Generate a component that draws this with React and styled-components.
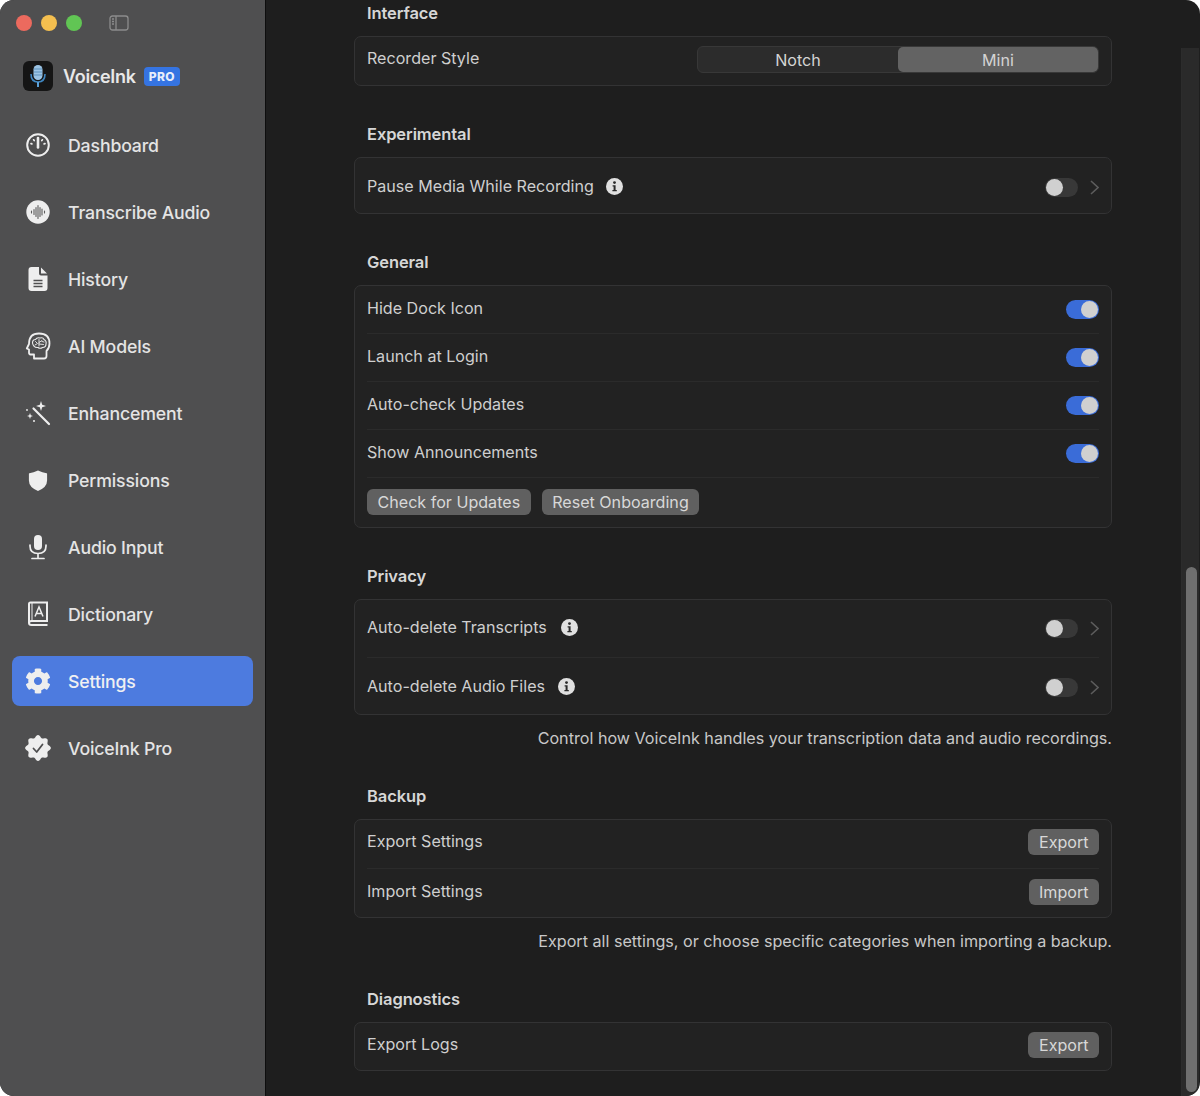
import React from "react";
import styled, { createGlobalStyle } from "styled-components";
import { FaCog } from "react-icons/fa";

const GlobalStyle = createGlobalStyle`
  html, body {
    margin: 0;
    padding: 0;
    background: #ffffff;
  }
  * {
    box-sizing: border-box;
  }
`;

const Window = styled.div`
  display: flex;
  width: 1200px;
  height: 1096px;
  overflow: hidden;
  border-radius: 14px;
  background: #1e1e1e;
  font-family: Inter, "Liberation Sans", sans-serif;
  color: #d8d8d8;
`;

const Sidebar = styled.aside`
  flex: none;
  width: 266px;
  padding: 0 12px;
  background: #4f4f50;
  border-right: 1px solid #0e0e0e;
`;

const TitleBar = styled.div`
  display: flex;
  align-items: center;
  height: 46px;
  padding-left: 4px;
  gap: 9px;
`;

const Light = styled.span`
  width: 16px;
  height: 16px;
  border-radius: 50%;
  background: ${(props) => props.color};
`;

const SidebarToggle = styled.svg`
  width: 20px;
  height: 16px;
  margin-left: 18px;
`;

const Brand = styled.div`
  display: flex;
  align-items: center;
  height: 30px;
  margin-top: 15px;
  margin-bottom: 29px;
  padding-left: 11px;
`;

const AppIcon = styled.svg`
  width: 30px;
  height: 30px;
  margin-right: 10px;
`;

const BrandName = styled.span`
  font-size: 18px;
  font-weight: 600;
  letter-spacing: -0.3px;
  color: #e8e8e8;
`;

const ProBadge = styled.span`
  margin-left: 8px;
  padding: 0 5px;
  height: 19px;
  line-height: 19px;
  border-radius: 4px;
  background: #3574e2;
  color: #e8eefa;
  font-size: 12px;
  font-weight: 800;
  letter-spacing: 0.4px;
`;

const Nav = styled.nav`
  display: flex;
  flex-direction: column;
  gap: 17px;
`;

const NavItem = styled.div`
  display: flex;
  align-items: center;
  height: 50px;
  border-radius: 8px;
  background: ${(props) => (props.$active ? "#4d7bdf" : "transparent")};
  color: ${(props) => (props.$active ? "#f0f0f2" : "#e4e4e4")};
  font-size: 17.7px;
  font-weight: 500;
  letter-spacing: -0.15px;
`;

const NavIcon = styled.span`
  display: flex;
  flex: none;
  align-items: center;
  justify-content: center;
  width: 28px;
  height: 30px;
  margin-left: 12px;
  margin-right: 16px;
  color: #eeeeee;
`;

const Main = styled.main`
  display: flex;
  flex: 1;
  min-width: 0;
`;

const Content = styled.div`
  flex: none;
  width: 915px;
  padding: 3px 69px 0 88px;
`;

const SectionTitle = styled.h2`
  margin: 0 0 13px 13px;
  height: 20px;
  line-height: 20px;
  font-size: 16.5px;
  font-weight: 600;
  letter-spacing: -0.1px;
  color: #d6d6d6;
`;

const Section = styled.section`
  margin-bottom: ${(props) => props.$gap}px;
`;

const Panel = styled.div`
  padding: 0 12px;
  border: 1px solid #333334;
  border-radius: 7px;
  background: #222222;
`;

const Row = styled.div`
  display: flex;
  align-items: center;
  height: ${(props) => props.$height}px;
  padding-top: ${(props) => props.$drop || 0}px;
  padding-bottom: ${(props) => props.$lift || 0}px;
  border-top: ${(props) => (props.$first ? "none" : "1px solid #2b2b2b")};
`;

const Label = styled.span`
  flex: ${(props) => (props.$width ? "none" : 1)};
  width: ${(props) => (props.$width ? `${props.$width}px` : "auto")};
  padding-bottom: 3px;
  font-size: 16.1px;
  color: #cfcfcf;
`;

const InfoIcon = styled.svg`
  flex: none;
  width: 17px;
  height: 17px;
  margin-right: auto;
  margin-bottom: 2px;
`;

const Segmented = styled.div`
  display: grid;
  grid-template-columns: 1fr 1fr;
  width: 402px;
  height: 27px;
  border: 1px solid #383838;
  border-radius: 6px;
  background: #2c2c2c;
`;

const Segment = styled.div`
  display: flex;
  align-items: center;
  justify-content: center;
  border-radius: 5px;
  background: ${(props) => (props.$active ? "#636363" : "transparent")};
  font-size: 16.1px;
  color: #d4d4d4;
`;

const Track = styled.span`
  position: relative;
  flex: none;
  width: 33px;
  height: 19px;
  border-radius: 10px;
  background: ${(props) => (props.$on ? "#3a6cd8" : "#383838")};
`;

const Knob = styled.span`
  position: absolute;
  top: 1px;
  left: ${(props) => (props.$on ? "15px" : "1px")};
  width: 17px;
  height: 17px;
  border-radius: 50%;
  background: #d0d0d0;
`;

const Chevron = styled.svg`
  flex: none;
  width: 9px;
  height: 15px;
  margin-left: 12px;
`;

const Button = styled.button`
  height: 26px;
  padding: 0 10.5px;
  border: none;
  border-radius: 6px;
  background: #606060;
  color: #d8d8d8;
  font-family: inherit;
  font-size: 16.1px;
`;

const ButtonRow = styled.div`
  display: flex;
  align-items: center;
  gap: 11px;
  height: 50px;
  padding-bottom: 2px;
  border-top: 1px solid #2b2b2b;
`;

const Footnote = styled.p`
  margin: 13px 0 0;
  height: 20px;
  line-height: 20px;
  text-align: right;
  font-size: 16.15px;
  color: #c8c8c8;
`;

const ScrollTrack = styled.div`
  flex: none;
  width: 18px;
  margin-top: 48px;
  padding: 519px 2px 4px 4px;
  border-left: 1px solid #2c2c2c;
  background: #2a2a2a;
`;

const ScrollThumb = styled.div`
  height: 100%;
  border-radius: 6px;
  background: #6f6f6f;
`;

// scalloped outline of the seal icon
const sealPath = () => {
  const points = [];
  for (let i = 0; i < 96; i++) {
    const a = (i / 96) * Math.PI * 2;
    const r = 11.6 + 1.3 * Math.cos(8 * a);
    points.push(`${(14 + r * Math.sin(a)).toFixed(2)} ${(14 - r * Math.cos(a)).toFixed(2)}`);
  }
  return `M${points.join(" L")} Z`;
};

const icons = {
  dashboard: (
    <svg width="28" height="28" viewBox="0 0 28 28" fill="none" stroke="currentColor">
      <circle cx="14" cy="14" r="10.8" strokeWidth="2" />
      <path d="M14 7 L14 16.5" strokeWidth="2.6" strokeLinecap="round" />
      <path d="M9.6 8.8 L10.2 9.6 M18.4 8.8 L17.8 9.6 M7 12.6 L7.9 12.9 M21 12.6 L20.1 12.9" strokeWidth="1.7" strokeLinecap="round" />
    </svg>
  ),
  transcribe: (
    <svg width="28" height="28" viewBox="0 0 28 28">
      <circle cx="14" cy="14" r="11.7" fill="currentColor" />
      <path d="M7.5 13 V15 M10 11.5 V16.5 M12 9.5 V18.5 M14 7.5 V20.5 M16 9.5 V18.5 M18 11 V17 M20.5 13 V15" stroke="#5c5c5c" strokeWidth="1.1" strokeLinecap="round" />
    </svg>
  ),
  history: (
    <svg width="20" height="26" viewBox="0 0 20 26">
      <path d="M3.5 1 H11 V7.5 Q11 9.5 13 9.5 H19.5 V22 Q19.5 25 16.5 25 H3.5 Q0.5 25 0.5 22 V4 Q0.5 1 3.5 1 Z M13 1.5 L19 7.6 H13 Z" fill="currentColor" />
      <path d="M5.5 14.5 H14.5 M5.5 17.5 H14.5 M5.5 20.5 H14.5" stroke="#4f4f50" strokeWidth="1.6" />
    </svg>
  ),
  models: (
    <svg width="26" height="28" viewBox="0 0 26 28" fill="none" stroke="currentColor" strokeLinecap="round" strokeLinejoin="round">
      <path d="M9 26.5 V22.5 H5.5 Q4 22.5 4 20.5 V17.5 L1.8 16.5 L4 12 Q4 1.5 14 1.5 Q24.5 1.5 24.5 11.5 Q24.5 16 21.5 19 V24 Q21.5 26.5 19 26.5 Z" strokeWidth="1.8" />
      <path d="M7.5 11 Q7.5 7.5 10.5 7.5 Q12 5 15 6 Q18 5 19 7.5 Q21.8 9 21 12 Q21 15.5 17.5 15.5 Q15 17 13 15.5 Q8.5 16 7.5 11 Z" strokeWidth="1.1" />
      <path d="M10.5 9.5 L12.5 11.5 L10 13 M14 7.5 L14 14 M14 10.5 L17 8.5 M14 12 L18.5 12.5 M17 9.5 L19 10" strokeWidth="0.9" />
    </svg>
  ),
  enhancement: (
    <svg width="26" height="26" viewBox="0 0 26 26" fill="currentColor">
      <path d="M8.5 8.5 L24 24" stroke="currentColor" strokeWidth="2.2" strokeLinecap="round" />
      <path d="M16 1 L17.2 4.8 L21 6 L17.2 7.2 L16 11 L14.8 7.2 L11 6 L14.8 4.8 Z" />
      <path d="M5 13 L5.8 15.2 L8 16 L5.8 16.8 L5 19 L4.2 16.8 L2 16 L4.2 15.2 Z" />
      <circle cx="2" cy="10" r="0.9" />
      <circle cx="9" cy="21" r="1" />
    </svg>
  ),
  permissions: (
    <svg width="20" height="23" viewBox="0 0 22 24">
      <path d="M11 1 Q16 3.5 20.5 4 Q21.2 4.1 21 5 V12 Q21 19.5 11 23.5 Q1 19.5 1 12 V5 Q0.8 4.1 1.5 4 Q6 3.5 11 1 Z" fill="currentColor" />
    </svg>
  ),
  audio: (
    <svg width="20" height="26" viewBox="0 0 20 26" fill="none">
      <rect x="6" y="1" width="8" height="15" rx="4" fill="currentColor" />
      <path d="M2 11 V12 Q2 19.5 10 19.5 Q18 19.5 18 12 V11 M10 19.5 V24.5 M4 24.5 H16" stroke="currentColor" strokeWidth="1.7" strokeLinecap="round" />
    </svg>
  ),
  dictionary: (
    <svg width="22" height="26" viewBox="0 0 22 26" fill="none" stroke="currentColor">
      <path d="M2 22 V3 Q2 1.5 3.5 1.5 H20 V20 H4.5 Q2 20 2 22 Q2 24 4.5 24 H20.5" strokeWidth="2" />
      <path d="M5 2 V19.5" strokeWidth="1" />
      <path d="M8 15.5 L12 6 L16 15.5 M9.3 12.5 H14.7" strokeWidth="1.5" />
    </svg>
  ),
  settings: <FaCog size={26} />,
  pro: (
    <svg width="28" height="28" viewBox="0 0 28 28">
      <path d={sealPath()} fill="currentColor" />
      <path d="M9.5 14.5 L12.7 18 L18.5 10.5" fill="none" stroke="#4f4f50" strokeWidth="1.8" strokeLinecap="round" strokeLinejoin="round" />
    </svg>
  ),
};

const navItems = [
  { key: "dashboard", label: "Dashboard" },
  { key: "transcribe", label: "Transcribe Audio" },
  { key: "history", label: "History" },
  { key: "models", label: "AI Models" },
  { key: "enhancement", label: "Enhancement" },
  { key: "permissions", label: "Permissions" },
  { key: "audio", label: "Audio Input" },
  { key: "dictionary", label: "Dictionary" },
  { key: "settings", label: "Settings", active: true },
  { key: "pro", label: "VoiceInk Pro" },
];

function Info() {
  return (
    <InfoIcon viewBox="0 0 17 17">
      <circle cx="8.5" cy="8.5" r="8.5" fill="#e0e0e0" />
      <circle cx="8.5" cy="4.6" r="1.4" fill="#2a2a2a" />
      <path d="M6.6 7.2 H9.6 V12 H10.8 V13.3 H6.4 V12 H7.6 V8.5 H6.6 Z" fill="#2a2a2a" />
    </InfoIcon>
  );
}

function Toggle({ on, chevron }) {
  return (
    <>
      <Track $on={on}>
        <Knob $on={on} />
      </Track>
      {chevron && (
        <Chevron viewBox="0 0 9 15" fill="none" stroke="#5c5c5c" strokeWidth="1.6">
          <path d="M1 1 L8 7.5 L1 14" />
        </Chevron>
      )}
    </>
  );
}

export default function App() {
  return (
    <>
      <GlobalStyle />
      <Window>
        <Sidebar>
          <TitleBar>
            <Light color="#ec6a5e" />
            <Light color="#f4bf4f" />
            <Light color="#61c554" />
            <SidebarToggle viewBox="0 0 20 16" fill="none" stroke="#8c8c8c" strokeWidth="1.3">
              <rect x="1" y="1" width="18" height="14" rx="2.5" />
              <path d="M7 1 V15 M3 4 H5 M3 6.5 H5 M3 9 H5" />
            </SidebarToggle>
          </TitleBar>
          <Brand>
            <AppIcon viewBox="0 0 30 30">
              <rect width="30" height="30" rx="6" fill="#151515" />
              <rect x="10.5" y="4" width="9" height="15" rx="4.5" fill="#9cc4e4" />
              <path d="M11 8 H19 M11 11 H19 M11 14 H19" stroke="#5f92bc" strokeWidth="1" />
              <path d="M8 13 Q8 21 15 21 Q22 21 22 13" fill="none" stroke="#3f86c0" strokeWidth="1.6" />
              <path d="M15 21 V26" stroke="#5aa0d8" strokeWidth="2" />
            </AppIcon>
            <BrandName>VoiceInk</BrandName>
            <ProBadge>PRO</ProBadge>
          </Brand>
          <Nav>
            {navItems.map((item) => (
              <NavItem key={item.key} $active={item.active}>
                <NavIcon>{icons[item.key]}</NavIcon>
                {item.label}
              </NavItem>
            ))}
          </Nav>
        </Sidebar>
        <Main>
          <Content>
            <Section $gap={38}>
              <SectionTitle>Interface</SectionTitle>
              <Panel>
                <Row $first $height={48} $lift={3}>
                  <Label>Recorder Style</Label>
                  <Segmented>
                    <Segment>Notch</Segment>
                    <Segment $active>Mini</Segment>
                  </Segmented>
                </Row>
              </Panel>
            </Section>
            <Section $gap={38}>
              <SectionTitle>Experimental</SectionTitle>
              <Panel>
                <Row $first $height={55} $drop={3}>
                  <Label $width={239}>Pause Media While Recording</Label>
                  <Info />
                  <Toggle chevron />
                </Row>
              </Panel>
            </Section>
            <Section $gap={38}>
              <SectionTitle>General</SectionTitle>
              <Panel>
                <Row $first $height={47}>
                  <Label>Hide Dock Icon</Label>
                  <Toggle on />
                </Row>
                <Row $height={48}>
                  <Label>Launch at Login</Label>
                  <Toggle on />
                </Row>
                <Row $height={48}>
                  <Label>Auto-check Updates</Label>
                  <Toggle on />
                </Row>
                <Row $height={48}>
                  <Label>Show Announcements</Label>
                  <Toggle on />
                </Row>
                <ButtonRow>
                  <Button>Check for Updates</Button>
                  <Button>Reset Onboarding</Button>
                </ButtonRow>
              </Panel>
            </Section>
            <Section $gap={38}>
              <SectionTitle>Privacy</SectionTitle>
              <Panel>
                <Row $first $height={57}>
                  <Label $width={194}>Auto-delete Transcripts</Label>
                  <Info />
                  <Toggle chevron />
                </Row>
                <Row $height={57} $drop={2}>
                  <Label $width={191}>Auto-delete Audio Files</Label>
                  <Info />
                  <Toggle chevron />
                </Row>
              </Panel>
              <Footnote>Control how VoiceInk handles your transcription data and audio recordings.</Footnote>
            </Section>
            <Section $gap={38}>
              <SectionTitle>Backup</SectionTitle>
              <Panel>
                <Row $first $height={48} $lift={4}>
                  <Label>Export Settings</Label>
                  <Button>Export</Button>
                </Row>
                <Row $height={49} $lift={2}>
                  <Label>Import Settings</Label>
                  <Button>Import</Button>
                </Row>
              </Panel>
              <Footnote>Export all settings, or choose specific categories when importing a backup.</Footnote>
            </Section>
            <Section $gap={0}>
              <SectionTitle>Diagnostics</SectionTitle>
              <Panel>
                <Row $first $height={47} $lift={3}>
                  <Label>Export Logs</Label>
                  <Button>Export</Button>
                </Row>
              </Panel>
            </Section>
          </Content>
          <ScrollTrack>
            <ScrollThumb />
          </ScrollTrack>
        </Main>
      </Window>
    </>
  );
}
